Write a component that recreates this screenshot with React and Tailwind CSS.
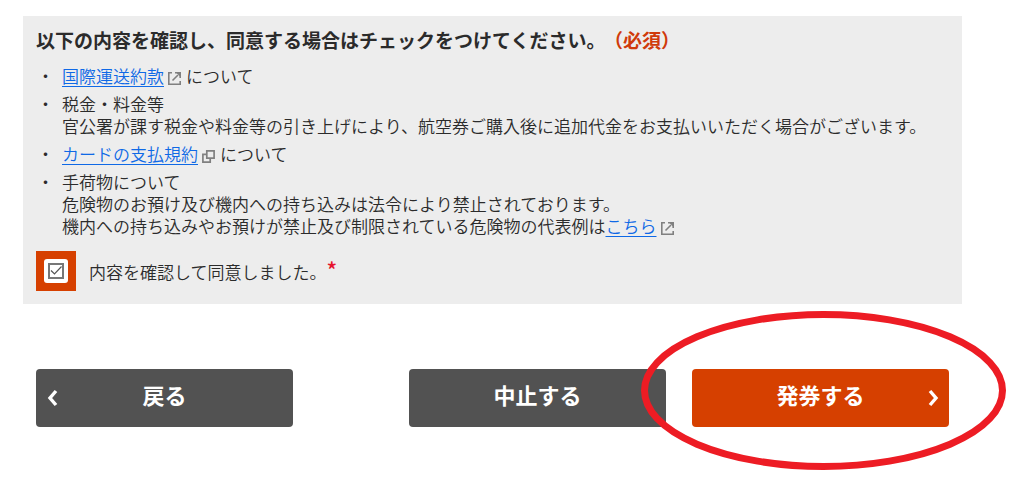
import { useState } from "react";

function ExternalIcon() {
  return (
    <svg className="ml-1 mr-[5px] inline-block h-[13px] w-[13px] align-[-2px]" viewBox="0 0 13 13" fill="none" stroke="#808080" strokeWidth="1.6" aria-hidden="true">
      <path d="M4 0.800H0.800v11.400h11.400V9" />
      <path d="M4.500 8.500L10 3" />
      <path d="M7 0.800h5.200V6" />
      <path d="M8.500 1h3.500v3.500z" fill="#808080" stroke="none" />
    </svg>
  );
}

function WindowIcon() {
  return (
    <svg className="ml-1 mr-[5px] inline-block h-[13px] w-[13px] align-[-2px]" viewBox="0 0 13 13" fill="none" stroke="#808080" strokeWidth="1.7" aria-hidden="true">
      <path d="M4.800 0.900h7.300v7.300H4.800z" />
      <path d="M4.800 4.400H0.900v7.700h7.300V8.200" />
    </svg>
  );
}

function TextLink({ href, children }) {
  return (
    <a href={href} className="text-[#0f69e6] underline decoration-1 underline-offset-[3px]">
      {children}
    </a>
  );
}

function Item({ children }) {
  return (
    <li className="flex">
      <span className="w-[26px] shrink-0 pl-[1px]" aria-hidden="true">・</span>
      <div>{children}</div>
    </li>
  );
}

function Chevron({ d, className }) {
  return (
    <svg className={className} viewBox="0 0 12 18" fill="none" stroke="#fff" strokeWidth="3.4" aria-hidden="true">
      <path d={d} />
    </svg>
  );
}

const button =
  "grid h-[58px] w-full grid-cols-[12px_1fr_12px] items-center rounded-[4px] px-[10px] text-[22px] font-bold text-white";

export default function App() {
  const [agreed, setAgreed] = useState(true);
  return (
    <main className="bg-white pt-4 pr-[62px] pb-[54px] pl-[23px] font-['Liberation_Sans','Noto_Sans_CJK_JP',sans-serif] text-[#2b2b2b]">
      <section className="bg-[#ededed] px-[13px] pt-3 pb-[13px]">
        <h2 className="text-[19px] leading-[28px] font-bold">
          以下の内容を確認し、同意する場合はチェックをつけてください。
          <span className="ml-2 text-[#d03a0b]">（必須）</span>
        </h2>
        <ul className="mt-[11px] flex flex-col gap-[6px] text-[17px] leading-[22px] font-[350]">
          <Item>
            <TextLink href="#conditions">国際運送約款</TextLink>
            <ExternalIcon />
            について
          </Item>
          <Item>
            税金・料金等
            <br />
            官公署が課す税金や料金等の引き上げにより、航空券ご購入後に追加代金をお支払いいただく場合がございます。
          </Item>
          <Item>
            <TextLink href="#card">カードの支払規約</TextLink>
            <WindowIcon />
            について
          </Item>
          <Item>
            手荷物について
            <br />
            危険物のお預け及び機内への持ち込みは法令により禁止されております。
            <br />
            機内への持ち込みやお預けが禁止及び制限されている危険物の代表例は
            <TextLink href="#dangerous">こちら</TextLink>
            <ExternalIcon />
          </Item>
        </ul>
        <div className="mt-3 flex items-center gap-[13px]">
          <span className="flex size-10 items-center justify-center bg-[#d64000]">
            <span className="relative flex size-6 items-center justify-center rounded-[3px] bg-white">
              <input
                id="agree"
                type="checkbox"
                checked={agreed}
                onChange={(e) => setAgreed(e.target.checked)}
                className="peer size-4 appearance-none border-2 border-[#777] bg-white"
              />
              <svg className="pointer-events-none absolute hidden size-4 peer-checked:block" viewBox="0 0 16 16" fill="none" stroke="#555" strokeWidth="1.2" aria-hidden="true">
                <path d="M3 7.500l3.500 3.500L13.500 3.500" />
              </svg>
            </span>
          </span>
          <label htmlFor="agree" className="text-[17px] leading-[22px] font-[350]">
            内容を確認して同意しました。
            <span className="font-['Noto_Sans_CJK_JP',sans-serif] text-[22px] leading-none font-medium text-[#e6142d]">*</span>
          </label>
        </div>
      </section>

      <div className="mt-[65px] grid grid-cols-[257fr_116fr_257fr_26fr_257fr] px-[13px]">
        <button type="button" className={`${button} bg-[#525252]`}>
          <Chevron d="M10 2L4 9l6 7" className="h-[18px] w-3" />
          <span className="pb-[3px]">戻る</span>
        </button>
        <button type="button" className={`${button} col-start-3 bg-[#525252]`}>
          <span className="col-start-2 pb-[3px]">中止する</span>
        </button>
        <div className="relative col-start-5">
          <button type="button" className={`${button} bg-[#d64000]`}>
            <span className="col-start-2 pb-[3px]">発券する</span>
            <Chevron d="M3 2l6 7L3 16" className="h-[18px] w-3" />
          </button>
          <svg
            className="pointer-events-none absolute -top-[58px] -left-[51px] h-[159px] w-[365px]"
            viewBox="0 0 365 159"
            fill="none"
            stroke="#ed1c24"
            strokeWidth="7"
            aria-hidden="true"
          >
            <ellipse cx="182.500" cy="79.500" rx="179" ry="76" />
          </svg>
        </div>
      </div>
    </main>
  );
}
